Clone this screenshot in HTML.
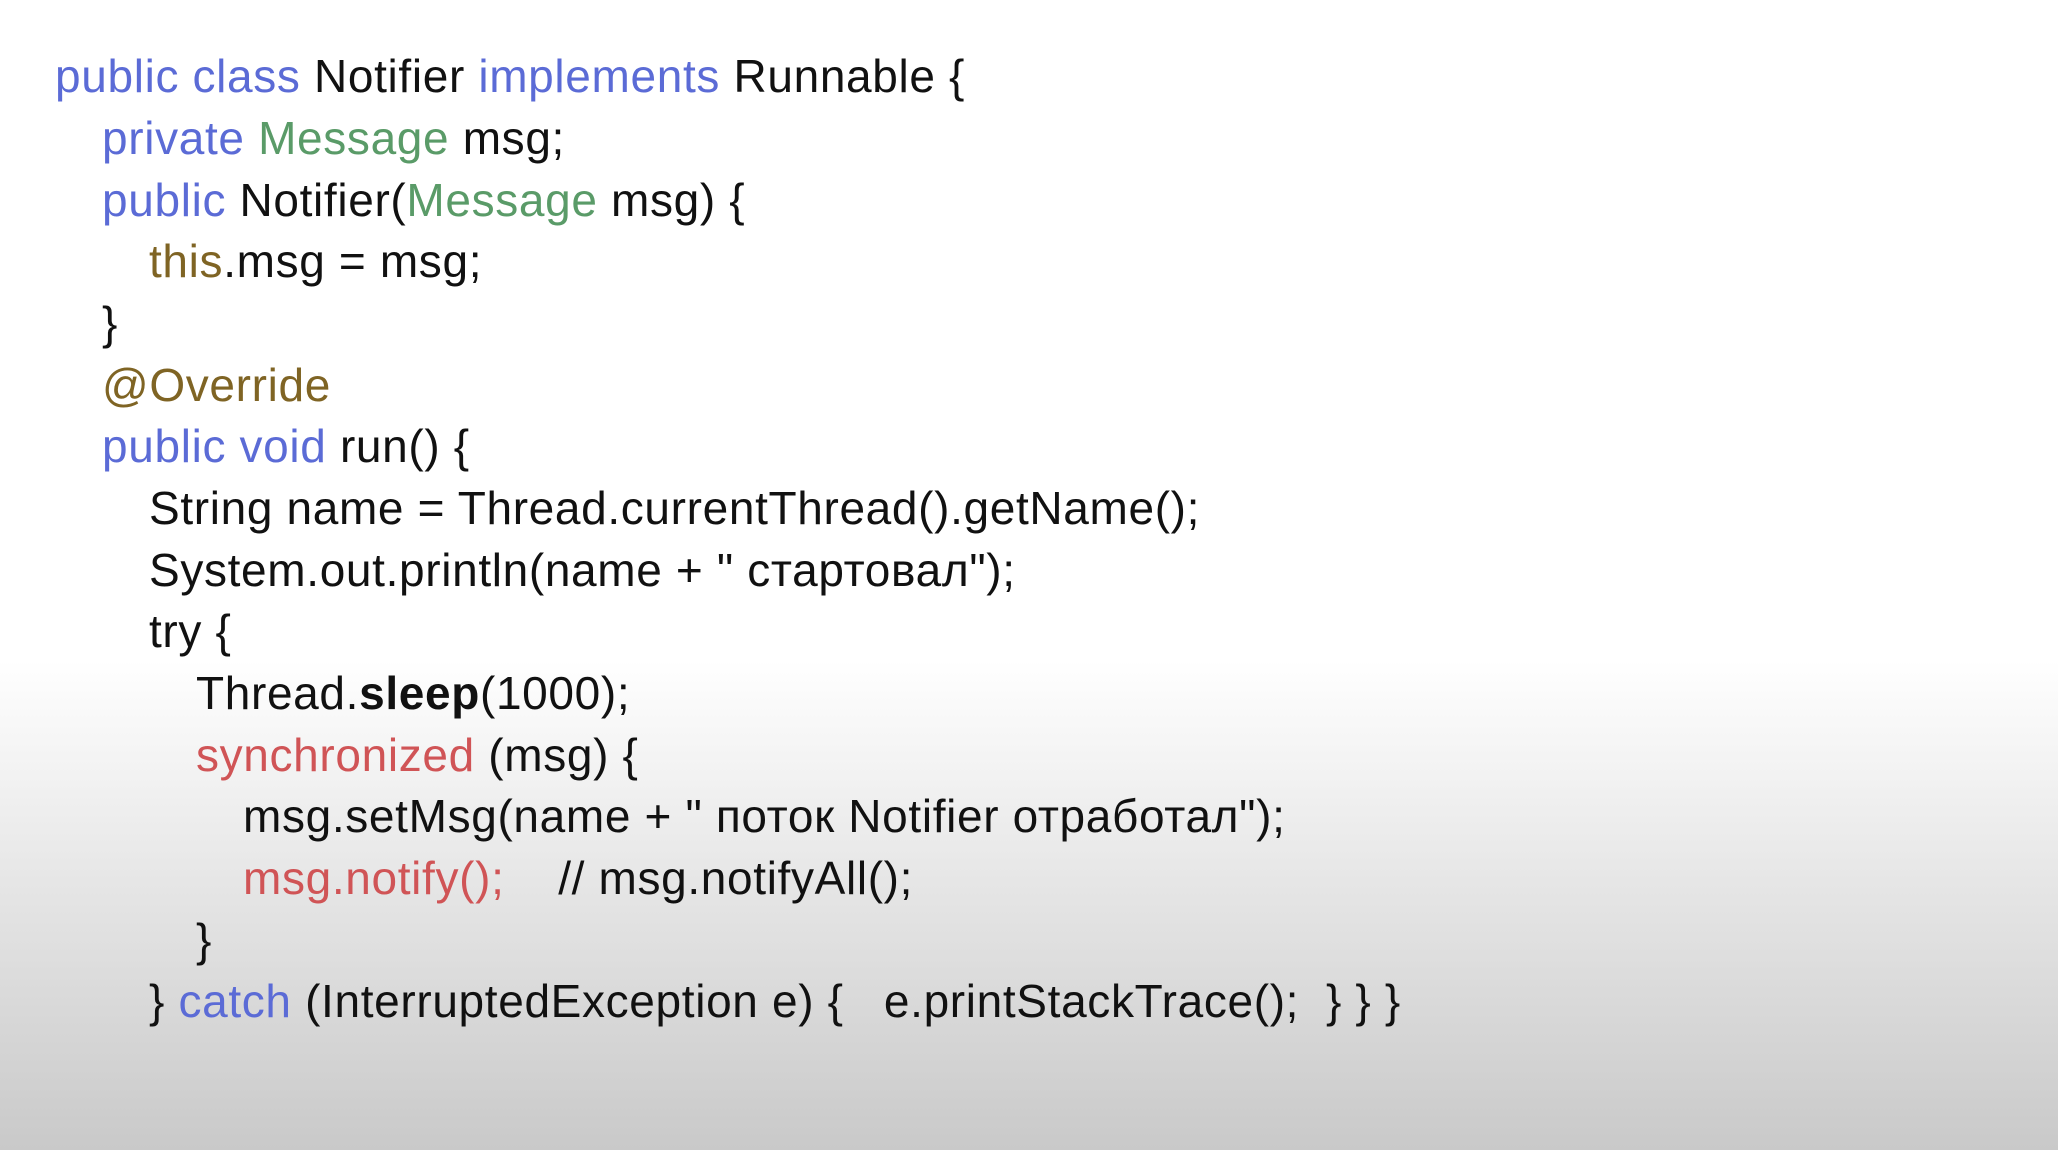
<!DOCTYPE html>
<html><head><meta charset="utf-8"><style>
html,body{margin:0;padding:0}
body{width:2058px;height:1150px;overflow:hidden;position:relative;
background:linear-gradient(to bottom,#ffffff 0px,#ffffff 660px,#e4e4e4 900px,#c9c9c9 1150px);
font-family:"Liberation Sans","DejaVu Sans",sans-serif;font-size:46px;color:#111;letter-spacing:0.65px}
.l{position:absolute;height:62px;line-height:62px;white-space:pre}
.b{color:#5b6bd6}.g{color:#5a9b68}.o{color:#7f6424}.r{color:#d05456}
</style></head><body>
<div class="l" style="left:55px;top:45px"><span class="b">public class</span> Notifier <span class="b">implements</span> Runnable {</div>
<div class="l" style="left:102px;top:107px"><span class="b">private</span> <span class="g">Message</span> msg;</div>
<div class="l" style="left:102px;top:169px"><span class="b">public</span> Notifier(<span class="g">Message</span> msg) {</div>
<div class="l" style="left:149px;top:230px"><span class="o">this</span>.msg = msg;</div>
<div class="l" style="left:102px;top:292px">}</div>
<div class="l" style="left:102px;top:354px"><span class="o">@Override</span></div>
<div class="l" style="left:102px;top:415px"><span class="b">public void</span> run() {</div>
<div class="l" style="left:149px;top:477px">String name = Thread.currentThread().getName();</div>
<div class="l" style="left:149px;top:539px">System.out.println(name + " стартовал");</div>
<div class="l" style="left:149px;top:600px">try {</div>
<div class="l" style="left:196px;top:662px">Thread.<b>sleep</b>(1000);</div>
<div class="l" style="left:196px;top:724px"><span class="r">synchronized</span> (msg) {</div>
<div class="l" style="left:243px;top:785px">msg.setMsg(name + " поток Notifier отработал");</div>
<div class="l" style="left:243px;top:847px"><span class="r">msg.notify();</span>    // msg.notifyAll();</div>
<div class="l" style="left:196px;top:909px">}</div>
<div class="l" style="left:149px;top:970px">} <span class="b">catch</span> (InterruptedException e) {   e.printStackTrace();  } } }</div>
</body></html>
